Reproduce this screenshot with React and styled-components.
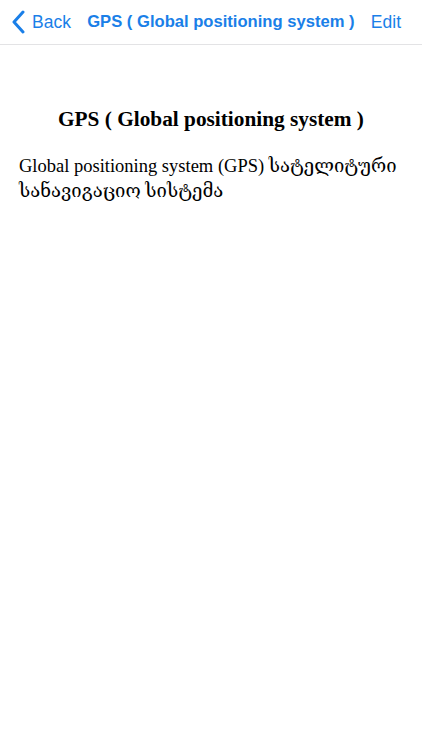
import React from 'react';
import styled, { createGlobalStyle } from 'styled-components';

const GlobalStyle = createGlobalStyle`
  html, body {
    margin: 0;
    padding: 0;
    background: #ffffff;
  }
  body {
    font-family: "Liberation Sans", Arial, sans-serif;
  }
`;

const Page = styled.div`
  width: 422px;
  min-height: 750px;
  background: #ffffff;
`;

const NavBar = styled.div`
  height: 45px;
  display: flex;
  align-items: center;
  padding: 0 21px 0 11px;
  border-bottom: 1px solid #e3e3e5;
  box-sizing: border-box;
  color: #1a7fe8;
`;

const BackButton = styled.div`
  display: flex;
  align-items: center;
  gap: 5px;
  font-size: 17.5px;
`;

const NavTitle = styled.div`
  flex: 1;
  text-align: center;
  font-size: 16.6px;
  font-weight: bold;
  white-space: nowrap;
`;

const EditButton = styled.div`
  font-size: 17.5px;
`;

const Content = styled.div`
  padding: 62px 19px 0;
  font-family: "Liberation Serif", "Times New Roman", "DejaVu Serif", serif;
  color: #000;
`;

const Heading = styled.h1`
  margin: 0 0 22px;
  text-align: center;
  font-size: 21.3px;
  font-weight: bold;
`;

const Body = styled.p`
  margin: 0;
  font-size: 18.5px;
  line-height: 25px;
`;

const Chevron = () => (
  <svg width="16" height="24" viewBox="0 0 16 24" fill="none">
    <path d="M12 2 L3 12 L12 22" stroke="#1a7fe8" strokeWidth="3" strokeLinecap="round" strokeLinejoin="round" />
  </svg>
);

const App = () => (
  <Page>
    <GlobalStyle />
    <NavBar>
      <BackButton>
        <Chevron />
        Back
      </BackButton>
      <NavTitle>GPS ( Global positioning system )</NavTitle>
      <EditButton>Edit</EditButton>
    </NavBar>
    <Content>
      <Heading>GPS ( Global positioning system )</Heading>
      <Body>Global positioning system (GPS) სატელიტური სანავიგაციო სისტემა</Body>
    </Content>
  </Page>
);

export default App;
